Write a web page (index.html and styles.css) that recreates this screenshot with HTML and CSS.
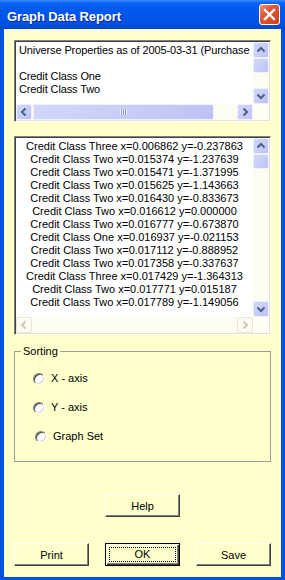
FILE: index.html
```html
<!DOCTYPE html>
<html lang="en">
<head>
  <meta charset="UTF-8">
  <title>Graph Data Report</title>
  <link rel="stylesheet" href="styles.css">
</head>
<body>

  <div class="window">

    <!-- title bar -->
    <div class="titlebar">
      <span class="title">Graph Data Report</span>
      <span class="close">
        <svg width="21" height="21" viewBox="0 0 21 21">
          <path d="M6 6 L15 15 M15 6 L6 15" stroke="#fff" stroke-width="2.4" stroke-linecap="square"/>
        </svg>
      </span>
    </div>

    <div class="client">

      <!-- properties list -->
      <div class="listbox list-props">
        <div class="list-text tight">
          <div>Universe Properties as of 2005-03-31 (Purchase</div>
          <div>&nbsp;</div>
          <div>Credit Class One</div>
          <div>Credit Class Two</div>
        </div>
        <div class="vscroll">
          <span class="sb-btn"><svg width="14" height="14" viewBox="0 0 14 14"><polyline points="3.5,8.5 7,5 10.5,8.5" class="chev"/></svg></span>
          <span class="sb-thumb"></span>
          <span class="sb-track"></span>
          <span class="sb-btn"><svg width="14" height="14" viewBox="0 0 14 14"><polyline points="3.5,5.5 7,9 10.5,5.5" class="chev"/></svg></span>
        </div>
        <div class="hscroll">
          <span class="sb-btn"><svg width="14" height="14" viewBox="0 0 14 14"><polyline points="8.5,3.5 5,7 8.5,10.5" class="chev"/></svg></span>
          <span class="sb-thumb hthumb"><span class="grip"></span></span>
          <span class="sb-track"></span>
          <span class="sb-btn"><svg width="14" height="14" viewBox="0 0 14 14"><polyline points="5.5,3.5 9,7 5.5,10.5" class="chev"/></svg></span>
        </div>
        <div class="corner"></div>
      </div>

      <!-- data points list -->
      <div class="listbox list-points">
        <div class="list-text centered">
          <div>Credit Class Three x=0.006862 y=-0.237863</div>
          <div>Credit Class Two x=0.015374 y=-1.237639</div>
          <div>Credit Class Two x=0.015471 y=-1.371995</div>
          <div>Credit Class Two x=0.015625 y=-1.143663</div>
          <div>Credit Class Two x=0.016430 y=-0.833673</div>
          <div>Credit Class Two x=0.016612 y=0.000000</div>
          <div>Credit Class Two x=0.016777 y=-0.673870</div>
          <div>Credit Class One x=0.016937 y=-0.021153</div>
          <div>Credit Class Two x=0.017112 y=-0.888952</div>
          <div>Credit Class Two x=0.017358 y=-0.337637</div>
          <div>Credit Class Three x=0.017429 y=-1.364313</div>
          <div>Credit Class Two x=0.017771 y=0.015187</div>
          <div>Credit Class Two x=0.017789 y=-1.149056</div>
        </div>
        <div class="vscroll">
          <span class="sb-btn"><svg width="14" height="14" viewBox="0 0 14 14"><polyline points="3.5,8.5 7,5 10.5,8.5" class="chev"/></svg></span>
          <span class="sb-thumb"></span>
          <span class="sb-track"></span>
          <span class="sb-btn"><svg width="14" height="14" viewBox="0 0 14 14"><polyline points="3.5,5.5 7,9 10.5,5.5" class="chev"/></svg></span>
        </div>
        <div class="hscroll disabled">
          <span class="sb-btn"><svg width="14" height="14" viewBox="0 0 14 14"><polyline points="8.5,3.5 5,7 8.5,10.5" class="chev"/></svg></span>
          <span class="sb-track"></span>
          <span class="sb-btn"><svg width="14" height="14" viewBox="0 0 14 14"><polyline points="5.5,3.5 9,7 5.5,10.5" class="chev"/></svg></span>
        </div>
        <div class="corner"></div>
      </div>

      <!-- sorting options -->
      <div class="group">
        <div class="group-title">Sorting</div>
        <label class="radio-row"><span class="radio"></span>X - axis</label>
        <label class="radio-row"><span class="radio"></span>Y - axis</label>
        <label class="radio-row shifted"><span class="radio"></span>Graph Set</label>
      </div>

      <div class="help-row">
        <button class="btn">Help</button>
      </div>

      <div class="button-row">
        <button class="btn">Print</button>
        <button class="btn default"><span class="focus">OK</span></button>
        <button class="btn">Save</button>
      </div>

    </div>
  </div>

</body>
</html>
```

FILE: styles.css
```css
body {
  margin: 0;
  font-family: "Liberation Sans", Arial, sans-serif;
  font-size: 11px;
  color: #000;
}

.window {
  width: 285px;
  height: 580px;
  background: #0053e0;
  display: flex;
  flex-direction: column;
}

/* title bar */
.titlebar {
  height: 29px;
  box-sizing: border-box;
  display: flex;
  align-items: center;
  justify-content: space-between;
  padding: 0 5px 0 7px;
  background: linear-gradient(#3a8dff 0, #0a62f2 3px, #0058ec 40%, #0052e4 80%, #0046cc 100%);
}

.title {
  color: white;
  font-weight: bold;
  font-size: 13px;
  letter-spacing: -0.1px;
  padding-top: 3px;
  text-shadow: 1px 1px #0b2a8c;
}

.close {
  width: 21px;
  height: 21px;
  box-sizing: border-box;
  border: 1px solid #fff;
  border-radius: 3px;
  background: linear-gradient(135deg, #f19474 0, #e2593a 35%, #cf3f1c 100%);
  display: flex;
}

.close svg {
  margin: -1px;
}

/* client area */
.client {
  flex: 1;
  margin: 0 4px 3px;
  background: #ffffcc;
  padding: 11px 10px 0;
  display: flex;
  flex-direction: column;
}

/* list boxes */
.listbox {
  box-sizing: border-box;
  border: 1px solid;
  border-color: #808080 #ffffff #ffffff #808080;
  box-shadow: inset 1px 1px #404040, inset -1px -1px #e4e2c8;
  padding: 1px;
  background: white;
  display: grid;
  grid-template-columns: 1fr 16px;
  grid-template-rows: 1fr 16px;
}

.list-props {
  height: 82px;
}

.list-points {
  height: 199px;
  margin-top: 14px;
}

.list-text {
  overflow: hidden;
  white-space: nowrap;
  line-height: 13px;
  padding: 2px 0 0 3px;
}

.list-text.tight {
  letter-spacing: -0.12px;
}

.list-text.centered {
  text-align: center;
  padding: 2px 0 0;
}

/* scroll bars */
.vscroll,
.hscroll {
  display: flex;
  background: #fcfcf1;
}

.vscroll {
  flex-direction: column;
}

.sb-btn,
.sb-thumb {
  box-sizing: border-box;
  width: 16px;
  height: 16px;
  border: 1px solid #eef0fc;
  border-radius: 2px;
  background: linear-gradient(135deg, #d2d8fb, #bcc3f5);
  display: flex;
  align-items: center;
  justify-content: center;
}

.sb-thumb {
  height: 15px;
}

.sb-track {
  flex: 1;
}

.hthumb {
  width: 181px;
  height: 16px;
  margin-left: 1px;
}

.grip {
  width: 7px;
  height: 6px;
  background: repeating-linear-gradient(90deg, #eef0fe 0 1px, #8e98d8 1px 2px);
}

.chev {
  fill: none;
  stroke: #4d6185;
  stroke-width: 2;
}

.disabled .sb-btn {
  background: transparent;
  border-color: #e8e6d6;
}

.disabled .chev {
  stroke: #cdcbbd;
}

.corner {
  background: #fffff2;
}

/* sorting group */
.group {
  box-sizing: border-box;
  height: 111px;
  margin-top: 16px;
  border: 1px solid #9c9c9c;
  padding: 0 0 0 18px;
}

.group-title {
  width: max-content;
  margin: -7px 0 0 -12px;
  padding: 0 2px;
  line-height: 13px;
  background: #ffffcc;
}

.radio-row {
  display: flex;
  align-items: center;
  gap: 6px;
  height: 13px;
  line-height: 13px;
  margin-top: 16px;
}

.radio-row:first-of-type {
  margin-top: 14px;
}

.radio-row.shifted {
  padding-left: 2px;
}

.radio {
  width: 12px;
  height: 12px;
  box-sizing: border-box;
  border-radius: 50%;
  border: 1px solid;
  border-color: #808080 #ffffff #ffffff #808080;
  box-shadow: inset 1px 1px #404040, inset -1px -1px #d4d0c8;
  background: #fff;
}

/* buttons */
.btn {
  width: 75px;
  height: 23px;
  box-sizing: border-box;
  font-family: inherit;
  font-size: 11px;
  color: #000;
  background: #ffffcc;
  border: 1px solid;
  border-color: #ffffff #404040 #404040 #ffffff;
  box-shadow: inset -1px -1px #808080;
  padding: 0;
}

.btn.default {
  border: 1px solid #000;
  box-shadow: inset 1px 1px #fff, inset -1px -1px #404040, inset -2px -2px #808080;
  padding: 3px;
}

.focus {
  display: block;
  height: 100%;
  box-sizing: border-box;
  border: 1px dotted #000;
  line-height: 13px;
}

.help-row {
  display: flex;
  justify-content: center;
  margin-top: 32px;
}

.button-row {
  display: flex;
  justify-content: space-between;
  margin-top: 26px;
}
```
